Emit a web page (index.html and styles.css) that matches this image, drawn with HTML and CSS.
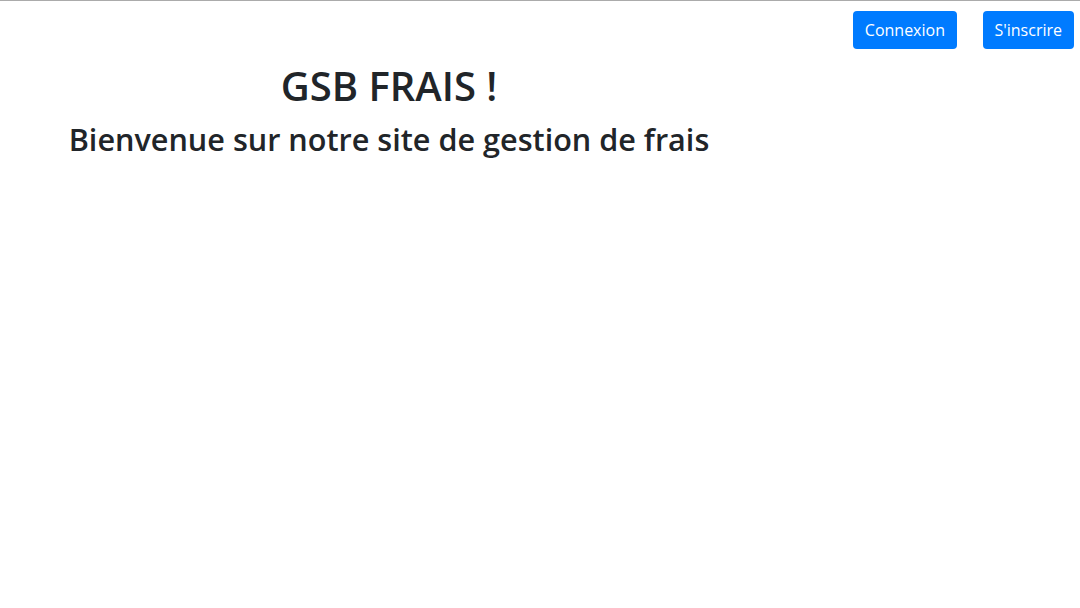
FILE: index.html
```html
<!DOCTYPE html>
<html lang="fr">
<head>
<meta charset="utf-8">
<title>GSB Frais</title>
<link rel="stylesheet" href="styles.css">
</head>
<body>
<header class="topbar">
  <a class="btn" href="#">Connexion</a>
  <a class="btn" href="#">S'inscrire</a>
</header>
<main class="hero">
  <h1 class="title">GSB FRAIS !</h1>
  <h2 class="subtitle">Bienvenue sur notre site de gestion de frais</h2>
</main>
</body>
</html>
```

FILE: styles.css
```css
html, body {
  margin: 0;
  padding: 0;
  background: #fff;
}
body {
  border-top: 1px solid #ababab;
  font-family: "Open Sans", "Noto Sans", sans-serif;
  color: #212529;
}
.topbar {
  display: flex;
  justify-content: flex-end;
  gap: 26px;
  padding: 10px 6px 0 0;
}
.btn {
  display: inline-block;
  background: #007bff;
  color: #fff;
  text-decoration: none;
  font-size: 16px;
  line-height: 24px;
  padding: 7px 12px 7px 11.5px;
  border-radius: 4px;
}
.hero {
  width: 778px;
  text-align: center;
}
.title {
  margin: 13px 0 0;
  font-size: 40px;
  font-weight: 600;
  line-height: 48px;
}
.subtitle {
  margin: 10px 0 0;
  font-size: 30.6px;
  font-weight: 600;
  line-height: 38px;
}
```
